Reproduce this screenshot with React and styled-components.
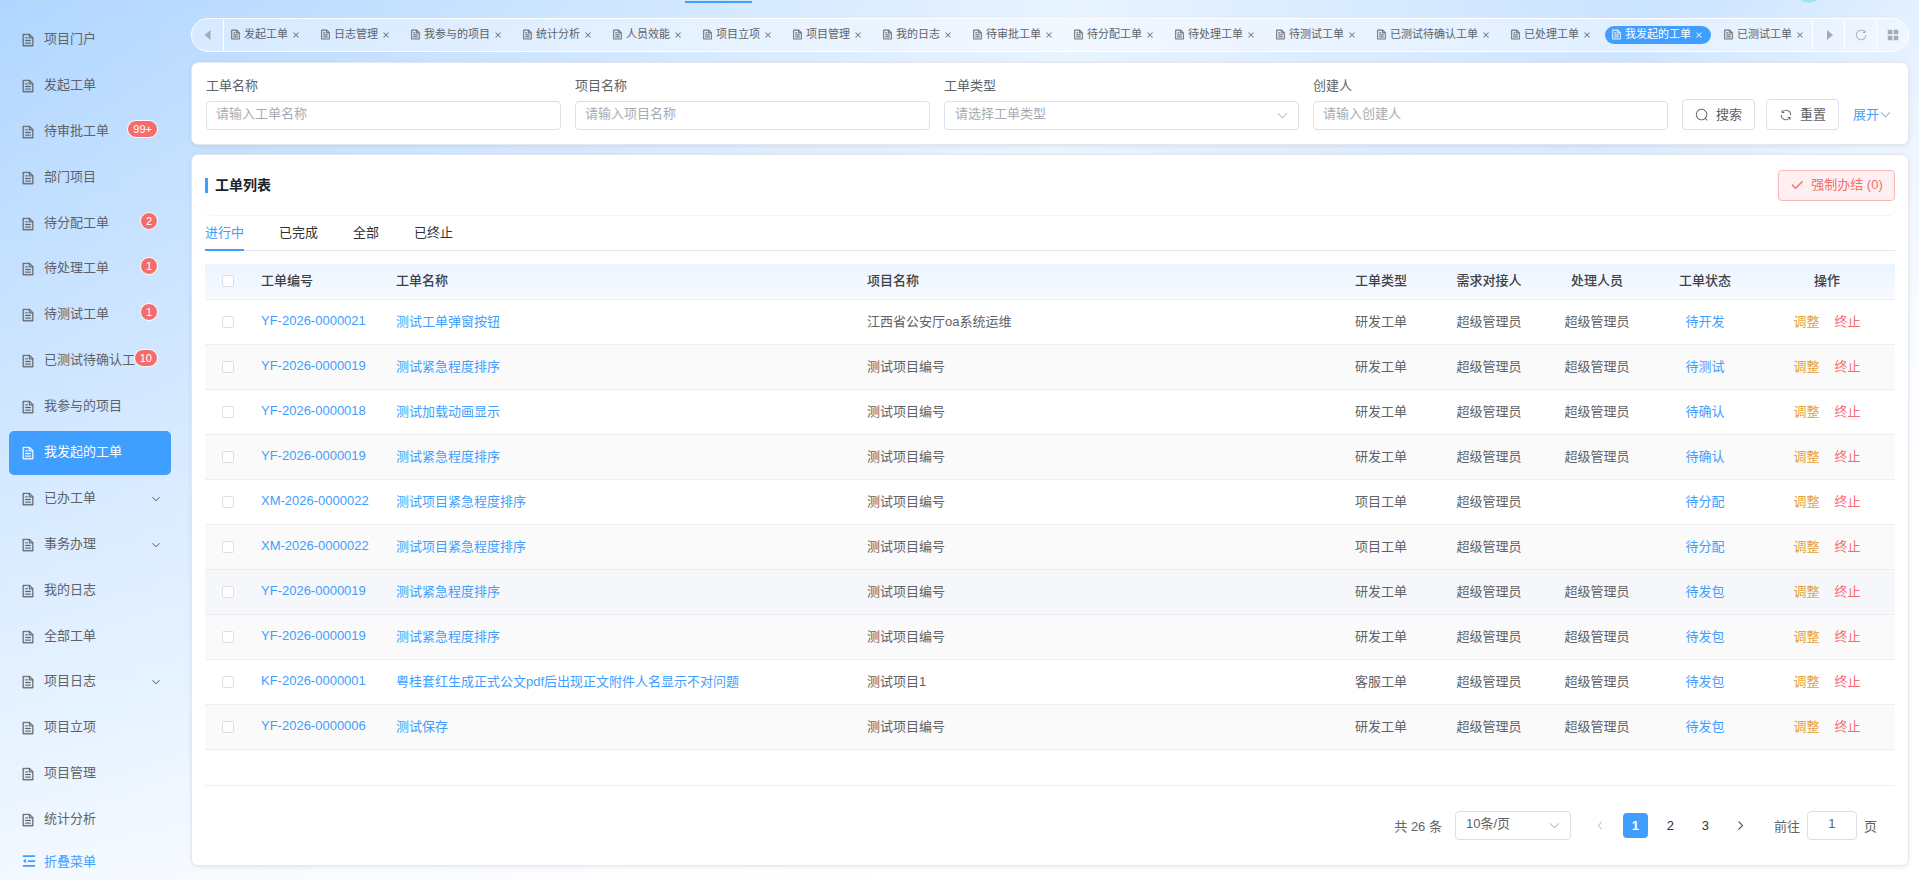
import { useState, useCallback } from 'react';
import styled, { createGlobalStyle, css } from 'styled-components';

const GlobalStyle = createGlobalStyle`
* { box-sizing: border-box; }
body {
    margin: 0;
    font-family: "Liberation Sans", "Noto Sans CJK SC", sans-serif;
    font-size: 13px;
    color: #606266;
}
button, input, select { font: inherit; color: inherit; }
button { padding: 0; border: 0; background: none; cursor: pointer; }
a { color: inherit; text-decoration: none; }
`;

//element 아이콘 path (viewBox 1024)
const ICONS = {
    document: 'M832 384H576V128H192v768h640zm-26.496-64L640 154.496V320zM160 64h480l256 256v608a32 32 0 0 1-32 32H160a32 32 0 0 1-32-32V96a32 32 0 0 1 32-32m160 448h384v64H320zm0-192h160v64H320zm0 384h384v64H320z',
    arrowDown: 'M831.872 340.864 512 652.672 192.128 340.864a30.592 30.592 0 0 0-42.752 0 29.12 29.12 0 0 0 0 41.6L489.664 714.24a32 32 0 0 0 44.672 0l340.288-331.712a29.12 29.12 0 0 0 0-41.728 30.592 30.592 0 0 0-42.752 0z',
    arrowLeft: 'M609.408 149.376 277.76 489.6a32 32 0 0 0 0 44.672l331.648 340.352a29.12 29.12 0 0 0 41.728 0 30.592 30.592 0 0 0 0-42.752L339.264 511.936l311.872-319.872a30.592 30.592 0 0 0 0-42.688 29.12 29.12 0 0 0-41.728 0z',
    arrowRight: 'M340.864 149.312a30.592 30.592 0 0 0 0 42.752L652.736 512 340.864 831.872a30.592 30.592 0 0 0 0 42.752 29.12 29.12 0 0 0 41.728 0L714.24 534.336a32 32 0 0 0 0-44.672L382.592 149.376a29.12 29.12 0 0 0-41.728 0z',
    search: 'm795.904 750.72 124.992 124.928a32 32 0 0 1-45.248 45.248L750.656 795.904a416 416 0 1 1 45.248-45.248zM480 832a352 352 0 1 0 0-704 352 352 0 0 0 0 704',
    refresh: 'M771.776 794.88A384 384 0 0 1 128 512h64a320 320 0 0 0 555.712 216.448H654.72a32 32 0 1 1 0-64h149.056a32 32 0 0 1 32 32v148.928a32 32 0 1 1-64 0v-50.56zM276.288 295.616h92.992a32 32 0 0 1 0 64H220.16a32 32 0 0 1-32-32V178.56a32 32 0 0 1 64 0v50.56A384 384 0 0 1 896.128 512h-64a320 320 0 0 0-555.776-216.384z',
    refreshRight: 'M784.512 230.272v-50.56a32 32 0 1 1 64 0v149.056a32 32 0 0 1-32 32H667.52a32 32 0 1 1 0-64h92.992A320 320 0 1 0 524.8 833.152a320 320 0 0 0 320-320h64a384 384 0 0 1-384 384 384 384 0 0 1-384-384 384 384 0 0 1 643.712-282.88z',
    check: 'M406.656 706.944 195.84 496.256a32 32 0 1 0-45.248 45.248l256 256 512-512a32 32 0 0 0-45.248-45.248L406.592 706.944z',
    caretLeft: 'M672 192 288 511.936 672 832z',
    caretRight: 'M384 192v640l384-320.064z',
    close: 'M764.288 214.592 512 466.88 259.712 214.592a31.936 31.936 0 0 0-45.12 45.12L466.752 512 214.528 764.224a31.936 31.936 0 1 0 45.12 45.184L512 557.184l252.288 252.288a31.936 31.936 0 0 0 45.12-45.12L557.12 512.064l252.288-252.352a31.936 31.936 0 1 0-45.12-45.184z',
    grid: 'M64 64h392v392H64zM568 64h392v392H568zM64 568h392v392H64zM568 568h392v392H568z',
    fold: 'M64 96h896v128H64zM416 448h544v128H416zM64 800h896v128H64zM64 512l224-160v320z',
};

const Svg = styled.svg`
flex: none;
width: ${(p) => p.$size}px;
height: ${(p) => p.$size}px;
fill: currentColor;
`;

const Icon = ({ name, size = 14, bold }) => (
    <Svg $size={size} viewBox='0 0 1024 1024' aria-hidden='true' stroke={bold ? 'currentColor' : 'none'} strokeWidth={bold || 0}>
        <path d={ICONS[name]} />
    </Svg>
);

const Page = styled.div`
display: flex;
min-height: 100vh;
background:
    linear-gradient(180deg, rgba(255, 255, 255, 0) 0%, rgba(255, 255, 255, 0.8) 100%),
    linear-gradient(155deg, rgba(255, 255, 255, 0) 45%, #fff 78%),
    linear-gradient(100deg, #b0d6ff 0%, #cbe4ff 26%, #e8f3ff 52%, #cae3ff 79%, #e6f2ff 100%);
`;

//sidebar
const Sidebar = styled.aside`
display: flex;
flex-direction: column;
width: 180px;
padding: 0 9px;
`;

const LogoEdge = styled.svg`
width: 56px;
height: 17px;
`;

const Menu = styled.ul`
display: flex;
flex: 1;
flex-direction: column;
margin: 0;
padding: 0;
list-style: none;
`;

const MenuItem = styled.li`
position: relative;
display: flex;
flex: 1;
align-items: center;
`;

const MenuLink = styled.a`
display: flex;
flex: 1;
align-items: center;
gap: 9px;
height: 44px;
padding: 0 10px 0 12px;
border-radius: 5px;
${(p) => p.$active && css`
    background: #409eff;
    color: #fff;
`}
`;

const MenuText = styled.span`
flex: 1;
line-height: 20px;
padding-bottom: 2px;
white-space: nowrap;
`;

const Badge = styled.sup`
position: absolute;
top: 11px;
right: 13px;
min-width: 18px;
height: 18px;
padding: 0 5px;
border: 1px solid #fff;
border-radius: 9px;
background: #f56c6c;
color: #fff;
font-size: 11px;
line-height: 16px;
text-align: center;
`;

const FoldButton = styled.button`
display: flex;
align-items: center;
gap: 8px;
height: 37px;
padding: 0 13px 2px;
color: #409eff;
`;

//main
const Main = styled.main`
display: flex;
flex: 1;
flex-direction: column;
min-width: 0;
padding: 0 10px 14px 11px;
`;

const TopEdge = styled.div`
display: flex;
justify-content: space-between;
height: 18px;
padding: 0 90px 0 494px;
`;

const TopMark = styled.div`
width: 67px;
height: 3px;
border-bottom: 2px solid #409eff;
`;

const TagBar = styled.nav`
display: flex;
height: 34px;
margin-bottom: 10px;
border: 1px solid #fff;
border-radius: 17px;
background: rgba(255, 255, 255, 0.4);
`;

const BarButton = styled.button`
display: flex;
flex: none;
align-items: center;
justify-content: center;
width: 32px;
margin: 1px 0;
border-left: 1px solid #fff;
color: #a8abb2;
&:first-child {
    border-left: 0;
    border-right: 1px solid #fff;
}
`;

const TagList = styled.div`
display: flex;
flex: 1;
align-items: center;
gap: 6px;
min-width: 0;
overflow: hidden;
`;

const Tag = styled.div`
display: flex;
flex: none;
align-items: center;
height: 18px;
padding: 0 8px 0 6px;
border-radius: 9px;
font-size: 11px;
line-height: 16px;
${(p) => p.$active && css`
    background: #409eff;
    color: #fff;
`}
`;

const TagLink = styled.a`
display: flex;
align-items: center;
gap: 3px;
padding-bottom: 2px;
`;

const TagClose = styled.button`
display: flex;
margin-left: 4px;
`;

const Card = styled.section`
border: 1px solid #e4e7ed;
border-radius: 7px;
background: #fff;
box-shadow: 0 1px 4px rgba(0, 0, 0, 0.08);
`;

//search form
const SearchCard = styled(Card)`
display: flex;
align-items: flex-end;
gap: 14px;
margin-bottom: 9px;
padding: 13px 14px 14px;
`;

const Fields = styled.div`
display: grid;
flex: 1;
grid-template-columns: repeat(4, 1fr);
gap: 14px;
`;

const Field = styled.div`
display: flex;
flex-direction: column;
gap: 5px;
`;

const Label = styled.label`
line-height: 20px;
`;

const boxStyle = css`
width: 100%;
height: 29px;
padding: 0 9px;
border: 1px solid #dcdfe6;
border-radius: 4px;
background: #fff;
outline: none;
`;

const TextInput = styled.input`
${boxStyle}
padding-bottom: 4px;
&::placeholder { color: #a8abb2; }
`;

const SelectWrap = styled.div`
position: relative;
width: ${(p) => p.$width || '100%'};
svg {
    position: absolute;
    top: 8px;
    right: 10px;
    color: #a8abb2;
    pointer-events: none;
}
`;

const Select = styled.select`
${boxStyle}
padding-bottom: 5px;
padding-left: 10px;
appearance: none;
color: ${(p) => (p.$empty ? '#a8abb2' : '#606266')};
`;

const Actions = styled.div`
display: flex;
align-items: center;
gap: 11px;
padding-right: 2px;
`;

const PlainButton = styled.button`
display: flex;
align-items: center;
justify-content: center;
gap: 7px;
width: ${(p) => p.$width}px;
height: 31px;
border: 1px solid ${(p) => (p.$danger ? '#fab6b6' : '#dcdfe6')};
border-radius: 4px;
background: ${(p) => (p.$danger ? '#fef0f0' : '#fff')};
color: ${(p) => (p.$danger ? '#f56c6c' : '#606266')};
`;

const ButtonText = styled.span`
padding-bottom: 3px;
`;

const ExpandButton = styled.button`
display: flex;
align-items: center;
margin-left: 3px;
color: #409eff;
`;

//list
const ListCard = styled(Card)`
display: flex;
flex: 1;
flex-direction: column;
padding: 0 13px;
`;

const ListHeader = styled.header`
display: flex;
align-items: center;
justify-content: space-between;
height: 61px;
border-bottom: 1px solid #f2f3f5;
border-radius: 7px;
`;

const Title = styled.h2`
display: flex;
align-items: center;
gap: 7px;
margin: 0;
color: #1d2129;
font-size: 14px;
font-weight: 600;
&::before {
    content: '';
    width: 3px;
    height: 15px;
    background: #409eff;
}
`;

const StatusTabs = styled.div`
display: flex;
gap: 35px;
height: 35px;
margin-bottom: 13px;
border-bottom: 1px solid #e4e7ed;
`;

const StatusTab = styled.button`
height: 35px;
padding-bottom: 2px;
border-bottom: 2px solid ${(p) => (p.$active ? '#409eff' : 'transparent')};
color: ${(p) => (p.$active ? '#409eff' : '#303133')};
`;

const TableArea = styled.div`
flex: 1;
border-bottom: 1px solid #ebeef5;
`;

const Table = styled.table`
width: 100%;
border-collapse: separate;
border-spacing: 0;
table-layout: fixed;
`;

const Th = styled.th`
height: 36px;
padding: 0 11px 4px;
border-bottom: 1px solid #ebeef5;
font-weight: 500;
color: #404144;
text-align: ${(p) => p.$align || 'left'};
`;

const HeadRow = styled.tr`
background: linear-gradient(180deg, #ebf4ff, #f8fbff);
`;

const Td = styled.td`
height: 45px;
padding: 0 11px 3px;
border-bottom: 1px solid #ebeef5;
text-align: ${(p) => p.$align || 'left'};
white-space: nowrap;
`;

const Row = styled.tr`
background: #fff;
&:nth-child(even) { background: #fafafa; }
${(p) => p.$hover && css`
    && { background: #f5f7fa; }
`}
`;

const Check = styled.input`
display: block;
appearance: none;
width: 12px;
height: 12px;
margin: 3px auto 0;
border: 1px solid #dcdfe6;
border-radius: 2px;
background: #fff;
`;

const BlueLink = styled.a`
color: #409eff;
`;

const Operations = styled.div`
display: flex;
justify-content: center;
gap: 15px;
`;

const Operation = styled.button`
color: ${(p) => p.$color};
`;

//pagination
const Pagination = styled.div`
display: flex;
align-items: center;
justify-content: flex-end;
height: 79px;
padding-right: 18px;
`;

const Total = styled.span`
margin-right: 13px;
`;

const Pager = styled.div`
display: flex;
gap: 10px;
margin: 0 21px 0 17px;
`;

const PageButton = styled.button`
display: flex;
align-items: center;
justify-content: center;
width: 25px;
height: 25px;
border-radius: 4px;
color: ${(p) => (p.disabled ? '#a8abb2' : '#303133')};
${(p) => p.$active && css`
    background: #409eff;
    color: #fff;
    font-weight: 700;
`}
`;

const Jump = styled.label`
display: flex;
align-items: center;
gap: 7px;
`;

const JumpInput = styled(TextInput)`
width: 50px;
text-align: center;
`;

const menus = [
    { name: '项目门户' },
    { name: '发起工单' },
    { name: '待审批工单', badge: '99+' },
    { name: '部门项目' },
    { name: '待分配工单', badge: '2' },
    { name: '待处理工单', badge: '1' },
    { name: '待测试工单', badge: '1' },
    { name: '已测试待确认工...', badge: '10' },
    { name: '我参与的项目' },
    { name: '我发起的工单' },
    { name: '已办工单', children: true },
    { name: '事务办理', children: true },
    { name: '我的日志' },
    { name: '全部工单' },
    { name: '项目日志', children: true },
    { name: '项目立项' },
    { name: '项目管理' },
    { name: '统计分析' },
];

const tags = [
    '发起工单', '日志管理', '我参与的项目', '统计分析', '人员效能', '项目立项', '项目管理', '我的日志',
    '待审批工单', '待分配工单', '待处理工单', '待测试工单', '已测试待确认工单', '已处理工单', '我发起的工单', '已测试工单',
];

const current = '我发起的工单';
const statusTabs = ['进行中', '已完成', '全部', '已终止'];
const admin = '超级管理员';

const rows = [
    ['YF-2026-0000021', '测试工单弹窗按钮', '江西省公安厅oa系统运维', '研发工单', admin, '待开发'],
    ['YF-2026-0000019', '测试紧急程度排序', '测试项目编号', '研发工单', admin, '待测试'],
    ['YF-2026-0000018', '测试加载动画显示', '测试项目编号', '研发工单', admin, '待确认'],
    ['YF-2026-0000019', '测试紧急程度排序', '测试项目编号', '研发工单', admin, '待确认'],
    ['XM-2026-0000022', '测试项目紧急程度排序', '测试项目编号', '项目工单', '', '待分配'],
    ['XM-2026-0000022', '测试项目紧急程度排序', '测试项目编号', '项目工单', '', '待分配'],
    ['YF-2026-0000019', '测试紧急程度排序', '测试项目编号', '研发工单', admin, '待发包'],
    ['YF-2026-0000019', '测试紧急程度排序', '测试项目编号', '研发工单', admin, '待发包'],
    ['KF-2026-0000001', '粤桂套红生成正式公文pdf后出现正文附件人名显示不对问题', '测试项目1', '客服工单', admin, '待发包'],
    ['YF-2026-0000006', '测试保存', '测试项目编号', '研发工单', admin, '待发包'],
];

const SideMenu = () => (
    <Sidebar>
        <LogoEdge viewBox='0 0 56 17' aria-hidden='true'>
            <ellipse cx='28' cy='-1' rx='3' ry='2' fill='#c9dfc4' />
        </LogoEdge>
        <Menu>
            {menus.map((menu) => (
                <MenuItem key={menu.name}>
                    <MenuLink href='#' $active={menu.name === current}>
                        <Icon name='document' bold={24} />
                        <MenuText>{menu.name}</MenuText>
                        {menu.children && <Icon name='arrowDown' size={10} bold={20} />}
                    </MenuLink>
                    {menu.badge && <Badge>{menu.badge}</Badge>}
                </MenuItem>
            ))}
        </Menu>
        <FoldButton type='button'><Icon name='fold' />折叠菜单</FoldButton>
    </Sidebar>
);

const Tags = () => (
    <TagBar>
        <BarButton type='button' aria-label='向左'><Icon name='caretLeft' size={16} /></BarButton>
        <TagList>
            {tags.map((tag) => (
                <Tag key={tag} $active={tag === current}>
                    <TagLink href='#'><Icon name='document' size={11} bold={24} />{tag}</TagLink>
                    <TagClose type='button' aria-label={`关闭${tag}`}><Icon name='close' size={8} bold={50} /></TagClose>
                </Tag>
            ))}
        </TagList>
        <BarButton type='button' aria-label='向右'><Icon name='caretRight' size={16} /></BarButton>
        <BarButton type='button' aria-label='刷新'><Icon name='refreshRight' /></BarButton>
        <BarButton type='button' aria-label='更多'><Icon name='grid' size={12} /></BarButton>
    </TagBar>
);

const SearchForm = () => {
    const [type, setType] = useState('');

    const onChangeType = useCallback((e) => setType(e.target.value), []);

    return (
        <SearchCard>
            <Fields>
                <Field>
                    <Label htmlFor='order-name'>工单名称</Label>
                    <TextInput id='order-name' placeholder='请输入工单名称' />
                </Field>
                <Field>
                    <Label htmlFor='project-name'>项目名称</Label>
                    <TextInput id='project-name' placeholder='请输入项目名称' />
                </Field>
                <Field>
                    <Label htmlFor='order-type'>工单类型</Label>
                    <SelectWrap>
                        <Select id='order-type' value={type} onChange={onChangeType} $empty={!type}>
                            <option value=''>请选择工单类型</option>
                            <option value='yf'>研发工单</option>
                            <option value='xm'>项目工单</option>
                            <option value='kf'>客服工单</option>
                        </Select>
                        <Icon name='arrowDown' size={13} />
                    </SelectWrap>
                </Field>
                <Field>
                    <Label htmlFor='creator'>创建人</Label>
                    <TextInput id='creator' placeholder='请输入创建人' />
                </Field>
            </Fields>
            <Actions>
                <PlainButton type='button' $width={73}><Icon name='search' /><ButtonText>搜索</ButtonText></PlainButton>
                <PlainButton type='button' $width={73}><Icon name='refresh' /><ButtonText>重置</ButtonText></PlainButton>
                <ExpandButton type='button'><ButtonText>展开</ButtonText><Icon name='arrowDown' size={13} /></ExpandButton>
            </Actions>
        </SearchCard>
    );
};

const OrderTable = () => (
    <Table>
        <colgroup>
            <col width='45' />
            <col width='135' />
            <col />
            <col />
            <col width='108' />
            <col width='108' />
            <col width='108' />
            <col width='108' />
            <col width='136' />
        </colgroup>
        <thead>
            <HeadRow>
                <Th><Check type='checkbox' aria-label='全选' /></Th>
                <Th>工单编号</Th>
                <Th>工单名称</Th>
                <Th>项目名称</Th>
                <Th $align='center'>工单类型</Th>
                <Th $align='center'>需求对接人</Th>
                <Th $align='center'>处理人员</Th>
                <Th $align='center'>工单状态</Th>
                <Th $align='center'>操作</Th>
            </HeadRow>
        </thead>
        <tbody>
            {rows.map(([no, name, project, type, handler, status], i) => (
                <Row key={i} $hover={i === 6}>
                    <Td><Check type='checkbox' aria-label={`选择${no}`} /></Td>
                    <Td><BlueLink href='#'>{no}</BlueLink></Td>
                    <Td><BlueLink href='#'>{name}</BlueLink></Td>
                    <Td>{project}</Td>
                    <Td $align='center'>{type}</Td>
                    <Td $align='center'>{admin}</Td>
                    <Td $align='center'>{handler}</Td>
                    <Td $align='center'><BlueLink href='#'>{status}</BlueLink></Td>
                    <Td>
                        <Operations>
                            <Operation type='button' $color='#e6a23c'>调整</Operation>
                            <Operation type='button' $color='#f56c6c'>终止</Operation>
                        </Operations>
                    </Td>
                </Row>
            ))}
        </tbody>
    </Table>
);

const App = () => {
    const [status, setStatus] = useState('进行中');
    const [page, setPage] = useState(1);

    return (
        <>
            <GlobalStyle />
            <Page>
                <SideMenu />
                <Main>
                    <TopEdge>
                        <TopMark />
                        <svg width='20' height='3' viewBox='0 0 20 3' aria-hidden='true'>
                            <circle cx='10' cy='-12' r='15' fill='#a5e3ee' />
                        </svg>
                    </TopEdge>
                    <Tags />
                    <SearchForm />
                    <ListCard>
                        <ListHeader>
                            <Title><ButtonText>工单列表</ButtonText></Title>
                            <PlainButton type='button' $danger $width={117}><Icon name='check' bold={50} /><ButtonText>强制办结 (0)</ButtonText></PlainButton>
                        </ListHeader>
                        <StatusTabs>
                            {statusTabs.map((name) => (
                                <StatusTab key={name} type='button' $active={name === status} onClick={() => setStatus(name)}>{name}</StatusTab>
                            ))}
                        </StatusTabs>
                        <TableArea>
                            <OrderTable />
                        </TableArea>
                        <Pagination>
                            <Total>共 26 条</Total>
                            <SelectWrap $width='116px'>
                                <Select aria-label='每页条数' defaultValue='10'>
                                    <option value='10'>10条/页</option>
                                    <option value='20'>20条/页</option>
                                    <option value='50'>50条/页</option>
                                </Select>
                                <Icon name='arrowDown' size={13} />
                            </SelectWrap>
                            <Pager>
                                <PageButton type='button' aria-label='上一页' disabled={page === 1} onClick={() => setPage(page - 1)}><Icon name='arrowLeft' size={11} /></PageButton>
                                {[1, 2, 3].map((n) => (
                                    <PageButton key={n} type='button' $active={n === page} onClick={() => setPage(n)}>{n}</PageButton>
                                ))}
                                <PageButton type='button' aria-label='下一页' disabled={page === 3} onClick={() => setPage(page + 1)}><Icon name='arrowRight' size={11} bold={40} /></PageButton>
                            </Pager>
                            <Jump>
                                前往
                                <JumpInput key={page} defaultValue={page} />
                                页
                            </Jump>
                        </Pagination>
                    </ListCard>
                </Main>
            </Page>
        </>
    );
};

export default App;
